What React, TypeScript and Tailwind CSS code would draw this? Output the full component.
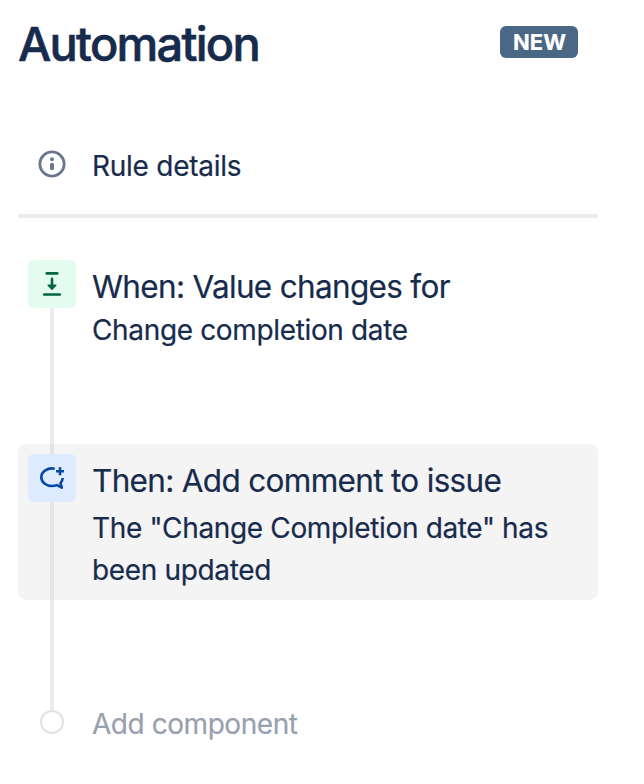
import type { ReactNode } from 'react';
import clsx from 'clsx';

function InfoIcon() {
  return (
    <svg width="28" height="28" viewBox="0 0 28 28" fill="none">
      <circle cx="14" cy="14" r="12.1" stroke="#6B778C" strokeWidth="2.9" />
      <circle cx="14" cy="9.2" r="2" fill="#6B778C" />
      <path d="M14 14.8v3.4" stroke="#6B778C" strokeWidth="4" strokeLinecap="round" />
    </svg>
  );
}

function FieldChangeIcon() {
  return (
    <svg width="48" height="48" viewBox="0 0 48 48" fill="none" stroke="#006644" strokeLinecap="round">
      <path d="M18.7 13.4h10.6M16.2 34.5h15.6" strokeWidth="2.6" />
      <path d="M24 18.8v7" strokeWidth="2.6" />
      <path d="M20.3 25.3h7.4L24 29.2z" fill="#006644" strokeWidth="1.6" strokeLinejoin="round" />
    </svg>
  );
}

function CommentAddIcon() {
  return (
    <svg width="48" height="48" viewBox="0 0 48 48" fill="none" stroke="#0747A6" strokeWidth="2.6">
      <path
        d="M26.7 14.7C19.5 13.3 13.3 17.6 13.3 23.3c0 5 4.8 8.700 10.700 8.700 1.800 0 3.400-.3 4.900-.9l4.900 2.500-1.300-4.400c1.300-1.500 2.100-3.200 2.200-5.200"
        strokeLinejoin="round"
      />
      <path d="M32 13.3v8M28 17.3h8" />
    </svg>
  );
}

interface RuleStepProps {
  icon: ReactNode;
  iconClass: string;
  title: string;
  active?: boolean;
  children: ReactNode;
}

function RuleStep({ icon, iconClass, title, active, children }: RuleStepProps) {
  const line = active ? 'bg-[#e4e4e8]' : 'bg-[#ebebf0]';

  return (
    <div className={clsx('flex gap-4 rounded-lg px-2.5', active && 'bg-[#f4f4f4]')}>
      <div className="flex w-12 shrink-0 flex-col items-center">
        <div className={clsx('h-2.5 w-1', active && line)} />
        <div className={clsx('size-12 rounded-md', iconClass)}>{icon}</div>
        <div className={clsx('w-1 flex-1', line)} />
      </div>
      <div className="pt-[17px] pb-[9px]">
        <h2 className="text-[31.5px] leading-10 tracking-[-0.68px] whitespace-nowrap">{title}</h2>
        {children}
      </div>
    </div>
  );
}

function Connector({ className }: { className: string }) {
  return <div className={clsx('ml-8 w-1 bg-[#ebebf0]', className)} />;
}

export default function App() {
  return (
    <main className="h-[784px] w-[644px] bg-white pt-4 pr-[46px] pl-[18px] font-['Inter',sans-serif] text-[#172b4d] [-webkit-text-stroke:0.2px]">
      <header className="flex h-14 items-center justify-between pr-5">
        <h1 className="text-[47px] leading-[56px] font-medium tracking-[-1.75px] [-webkit-text-stroke:0.6px]">
          Automation
        </h1>
        <span className="mb-1 flex h-8 w-[78px] items-center justify-center rounded-md bg-[#4a6785] pl-px text-[22px] font-bold text-white">
          NEW
        </span>
      </header>

      <div className="mt-[74px] flex h-[72px] items-start gap-[26px] border-b-4 border-[#ebebf0] pl-5">
        <div className="pt-1">
          <InfoIcon />
        </div>
        <span className="text-[28px] leading-[41px] tracking-[-0.25px]">Rule details</span>
      </div>

      <section className="mt-8">
        <RuleStep icon={<FieldChangeIcon />} iconClass="bg-[#e3fcef]" title="When: Value changes for">
          <p className="mt-0.5 text-[28px] leading-[42px] tracking-[-0.35px]">Change completion date</p>
        </RuleStep>
        <Connector className="h-[84px]" />
        <RuleStep icon={<CommentAddIcon />} iconClass="bg-[#deebff]" title="Then: Add comment to issue" active>
          <p className="mt-1.5 text-[28px] leading-[42px] tracking-[-0.35px]">
            The "Change Completion date" has
            <br />
            been updated
          </p>
        </RuleStep>
        <Connector className="h-[110px]" />
        <div className="flex h-6 items-center gap-7 pl-[22px]">
          <span className="size-6 rounded-full border-2 border-[#dfe1e6] bg-white" />
          <span className="mt-1 text-[28px] leading-10 tracking-[-0.45px] text-[#97a0af]">Add component</span>
        </div>
      </section>
    </main>
  );
}
